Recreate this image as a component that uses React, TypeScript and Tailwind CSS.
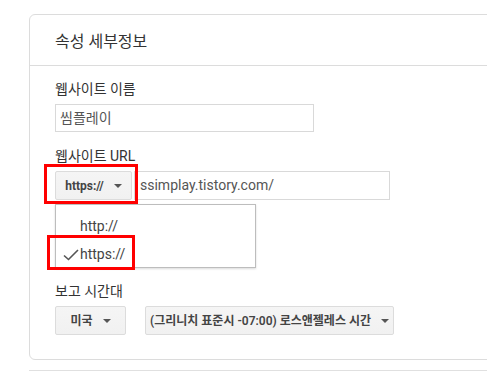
import React from 'react';

const font = { fontFamily: 'Roboto, "Noto Sans CJK KR", sans-serif' };

function Caret() {
  return (
    <svg width="8" height="4" viewBox="0 0 8 4" className="shrink-0">
      <path d="M0 0 L8 0 L4 4 Z" fill="#555" />
    </svg>
  );
}

function GrayButton({ children, className = '' }: { children: React.ReactNode; className?: string }) {
  return (
    <div
      className={`h-[29px] flex items-center justify-center gap-[10px] rounded-[2px] border border-[#dcdcdc] bg-gradient-to-b from-[#f5f5f5] to-[#f1f1f1] text-[12px] font-bold text-[#444] ${className}`}
    >
      {children}
    </div>
  );
}

export default function App() {
  return (
    <div className="relative w-[487px] h-[381px] overflow-hidden bg-white" style={font}>
      {/* Card */}
      <div className="ml-[29px] mt-[14px] w-[470px] rounded-l-[6px] border border-[#dcdcdc] bg-white">
        <div className="h-[51px] flex items-center px-[25px] border-b border-[#dcdcdc] text-[16px] text-[#333] pt-[3px]">
          속성 세부정보
        </div>

        <div className="px-[25px] pt-[13px] pb-[24px] text-[14px] text-[#333]">
          <div className="h-[20px] leading-[20px]">웹사이트 이름</div>
          <div className="mt-[5px] w-[259px] h-[28px] border border-[#d9d9d9] flex items-center px-[4px] text-[#555]">
            씸플레이
          </div>

          <div className="mt-[14px] h-[20px] leading-[20px]">웹사이트 URL</div>
          <div className="mt-[5px] flex items-center gap-[2px]">
            <GrayButton className="w-[77px] h-[28px] border-[#7fa6e2]">
              <span>https://</span>
              <Caret />
            </GrayButton>
            <div className="w-[256px] h-[29px] border border-[#d9d9d9] flex items-center px-[5px] text-[#555]">
              ssimplay.tistory.com/
            </div>
          </div>

          <div className="mt-[81px] h-[20px] leading-[20px]">보고 시간대</div>
          <div className="mt-[5px] flex gap-[19px]">
            <GrayButton className="w-[71px]">
              <span>미국</span>
              <Caret />
            </GrayButton>
            <GrayButton className="w-[249px]">
              <span className="font-semibold">(그리니치 표준시 -07:00) 로스앤젤레스 시간</span>
              <Caret />
            </GrayButton>
          </div>
        </div>
      </div>

      <div className="ml-[29px] mt-[10px] border-t border-[#e0e0e0]" />

      {/* Dropdown menu */}
      <div className="absolute left-[55px] top-[204px] w-[201px] h-[64px] border border-[#bdbdbd] bg-white shadow-[0_1px_2px_rgba(0,0,0,0.15)] pt-[7px] text-[14px] text-[#444]">
        <div className="h-[28px] flex items-center pl-[24px]">http://</div>
        <div className="relative h-[28px] flex items-center pl-[24px]">
          <svg width="16" height="12" viewBox="0 0 16 12" className="absolute left-[7px] top-[9px]">
            <path d="M1 6.5 L5.5 10.5 L15 1" fill="none" stroke="#555" strokeWidth="1.6" />
          </svg>
          https://
        </div>
      </div>

      {/* Red highlight boxes */}
      <div className="absolute left-[44px] top-[164px] w-[94px] h-[40px] border-[3px] border-[#ff0000]" />
      <div className="absolute left-[47px] top-[235px] w-[88px] h-[35px] border-[3px] border-[#ff0000]" />
    </div>
  );
}
